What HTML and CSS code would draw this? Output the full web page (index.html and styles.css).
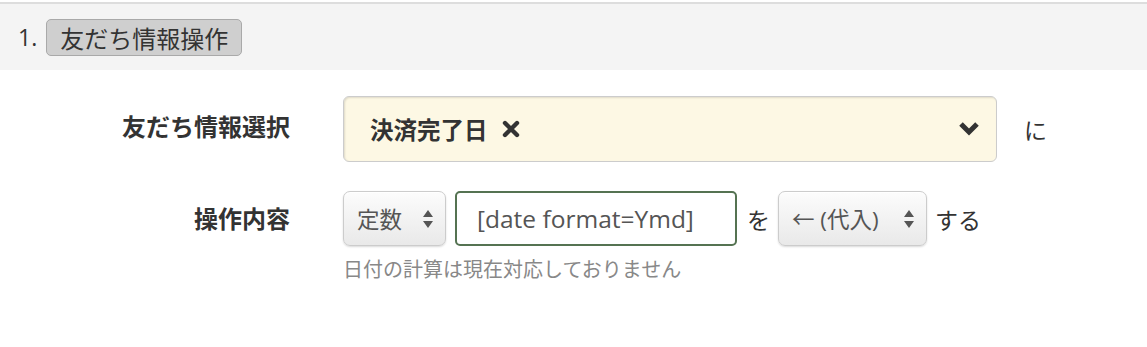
FILE: index.html
```html
<!DOCTYPE html>
<html lang="ja">
<head>
    <meta charset="UTF-8">
    <title>友だち情報操作</title>
    <link rel="stylesheet" href="styles.css">
</head>
<body>
    <div class="step-head">
        <span class="step-no">1.</span>
        <span class="step-tag">友だち情報操作</span>
    </div>

    <div class="form">
        <div class="form-row row-target">
            <label class="form-label">友だち情報選択</label>
            <div class="form-field">
                <div class="chosen">
                    <span class="chosen-value">決済完了日
                        <svg class="chosen-x" width="18" height="18" viewBox="0 0 18 18">
                            <path d="M3 3 L15 15 M15 3 L3 15" stroke="#333" stroke-width="4.4" stroke-linecap="round"/>
                        </svg>
                    </span>
                    <svg class="chosen-caret" width="22" height="16" viewBox="0 0 22 16">
                        <polyline points="3,3 11,11 19,3" fill="none" stroke="#333" stroke-width="5" stroke-linejoin="miter"/>
                    </svg>
                </div>
                <span class="suffix">に</span>
            </div>
        </div>

        <div class="form-row row-op">
            <label class="form-label">操作内容</label>
            <div class="form-field-wrap">
                <div class="form-field">
                    <div class="select select-type">
                        <span>定数</span>
                        <svg class="updown" width="10" height="20" viewBox="0 0 10 20">
                            <path d="M5 1 L10 8 L0 8 Z M5 19 L10 12 L0 12 Z" fill="#555"/>
                        </svg>
                    </div>
                    <input class="text-input" type="text" value="[date format=Ymd]">
                    <span class="suffix">を</span>
                    <div class="select select-op">
                        <span>← (代入)</span>
                        <svg class="updown" width="10" height="20" viewBox="0 0 10 20">
                            <path d="M5 1 L10 8 L0 8 Z M5 19 L10 12 L0 12 Z" fill="#555"/>
                        </svg>
                    </div>
                    <span class="suffix">する</span>
                </div>
                <p class="help">日付の計算は現在対応しておりません</p>
            </div>
        </div>
    </div>
</body>
</html>
```

FILE: styles.css
```css
* {
    margin: 0;
    padding: 0;
    box-sizing: border-box;
}

body {
    background: #ffffff;
    color: #333333;
    font-family: "Open Sans", "Noto Sans CJK JP", sans-serif;
    font-size: 22px;
}

.step-head {
    margin-top: 2px;
    border-top: 2px solid #dddddd;
    background: #f4f4f4;
    height: 68px;
    display: flex;
    align-items: center;
    padding-left: 18px;
    gap: 9px;
}

.step-no {
    font-size: 23px;
}

.step-tag {
    display: inline-flex;
    align-items: center;
    height: 37px;
    padding: 0 13px;
    background: #cfcfcf;
    border: 1px solid #a9a9a9;
    border-radius: 5px;
    font-size: 24px;
    color: #333333;
}

.form {
    padding-top: 26px;
    display: flex;
    flex-direction: column;
    gap: 29px;
}

.form-row {
    display: grid;
    grid-template-columns: 290px 1fr;
    column-gap: 53px;
}

.form-label {
    text-align: right;
    font-weight: bold;
    font-size: 24px;
    color: #333333;
}

.row-target .form-label {
    padding-top: 12px;
}

.row-op .form-label {
    padding-top: 9px;
}

.form-field {
    display: flex;
    align-items: center;
}

.chosen {
    width: 654px;
    height: 66px;
    background: #fdf8e4;
    border: 1px solid #cccccc;
    border-radius: 6px;
    box-shadow: inset 1px 1px 2px rgba(0, 0, 0, 0.12);
    display: flex;
    align-items: center;
    justify-content: space-between;
    padding: 0 16px 0 26px;
}

.chosen-value {
    display: flex;
    align-items: center;
    gap: 14px;
    font-weight: bold;
    font-size: 23.5px;
}

.row-target .suffix {
    margin-left: 27px;
}

.suffix {
    font-size: 23px;
    color: #333333;
}

.select {
    height: 55px;
    display: flex;
    align-items: center;
    justify-content: space-between;
    padding: 0 12px 0 13px;
    border: 1px solid #cccccc;
    border-radius: 7px;
    background: linear-gradient(#fcfcfc, #e9e9e9);
    box-shadow: 0 1px 2px rgba(0, 0, 0, 0.15), inset 0 1px 0 #ffffff;
    font-size: 22.5px;
    color: #555555;
}

.select-type {
    width: 103px;
}

.select-op {
    width: 149px;
    margin-left: 8px;
    margin-right: 8px;
}

.text-input {
    width: 282px;
    height: 55px;
    margin-left: 9px;
    margin-right: 10px;
    border: 2px solid #557352;
    border-radius: 5px;
    padding: 0 20px;
    font-family: "Open Sans", "Noto Sans CJK JP", sans-serif;
    font-size: 24.5px;
    color: #555555;
    background: #ffffff;
    outline: none;
}

.help {
    margin-top: 8px;
    font-size: 20px;
    color: #888888;
}
```
